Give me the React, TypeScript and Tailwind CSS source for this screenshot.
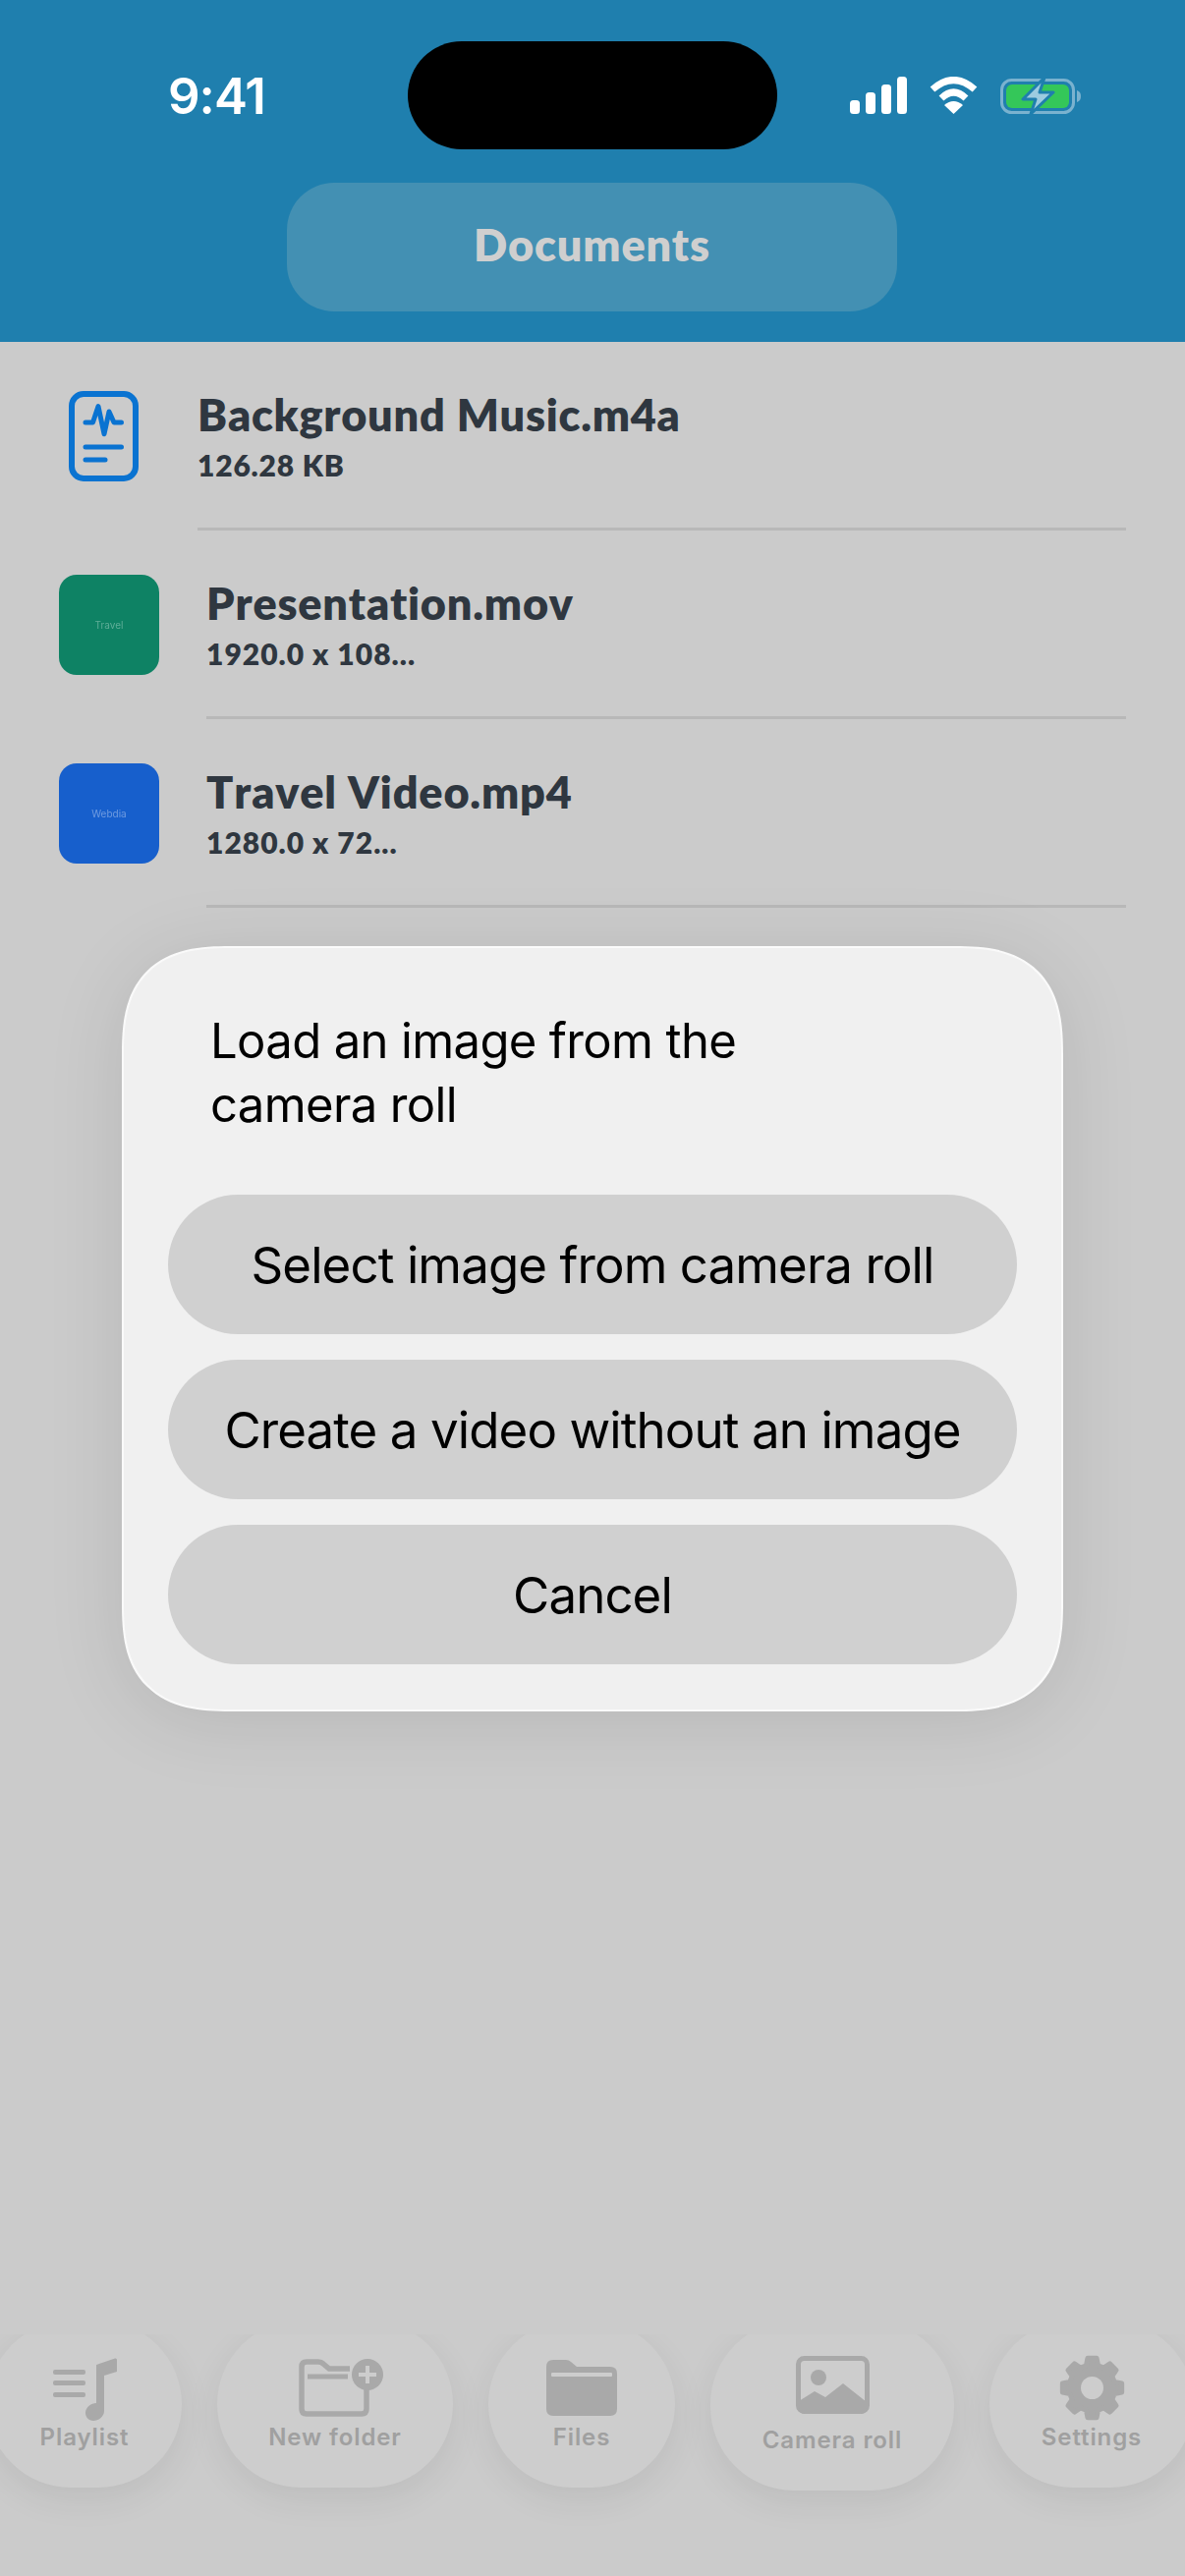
import React from 'react';

const TITLE_FONT = 'font-[Lato,"Noto_Sans",sans-serif]';

const gearPath = (() => {
  const parts: string[] = [];
  const teeth = 8;
  for (let i = 0; i < teeth; i++) {
    const a = (i / teeth) * Math.PI * 2 - Math.PI / 2;
    const pts: [number, number][] = [
      [a - 0.26, 23.5],
      [a - 0.15, 30.5],
      [a + 0.15, 30.5],
      [a + 0.26, 23.5],
    ];
    pts.forEach(([t, r]) => {
      const x = 33.5 + r * Math.cos(t);
      const y = 33.5 + r * Math.sin(t);
      parts.push(`${parts.length ? 'L' : 'M'}${x.toFixed(2)} ${y.toFixed(2)}`);
    });
  }
  return parts.join(' ') + ' Z';
})();

const SignalIcon = () => (
  <svg width="58" height="38" viewBox="0 0 58 38" fill="#fff">
    <rect x="0" y="24" width="10" height="14" rx="3.5" />
    <rect x="16" y="16" width="10" height="22" rx="3.5" />
    <rect x="32" y="8" width="10" height="30" rx="3.5" />
    <rect x="48" y="0" width="10" height="38" rx="3.5" />
  </svg>
);

const WifiIcon = () => (
  <svg width="49" height="38" viewBox="0 0 49 38" fill="none" stroke="#fff" strokeWidth="7">
    <path d="M3 13 Q24.5 -6 46 13" />
    <path d="M12 22 Q24.5 10 37 22" />
    <path d="M24.5 38 L15 29 Q24.5 21 34 29 Z" fill="#fff" stroke="none" />
  </svg>
);

const BatteryIcon = () => (
  <svg width="82" height="39" viewBox="0 0 82 39" fill="none">
    <rect x="1.5" y="3.5" width="73" height="33" rx="10" stroke="#7ab2cf" strokeWidth="3" />
    <path d="M78 14 C81 15 82 17 82 20 C82 23 81 25 78 26 Z" fill="#7ab2cf" />
    <rect x="6" y="8" width="64" height="24" rx="6" fill="#34c759" />
    <path d="M45 1 L23 23 H36 L31 38 L54 16 H40 Z" fill="#9ccbe0" stroke="#1f7fae" strokeWidth="3" strokeLinejoin="round" />
  </svg>
);

const AudioDocIcon = () => (
  <svg width="71" height="92" viewBox="0 0 71 92" fill="none" stroke="#0a73d1" strokeWidth="5" strokeLinecap="round" strokeLinejoin="round">
    <rect x="3" y="3" width="65" height="86" rx="12" strokeWidth="6" />
    <path d="M17 32 H24.5 L30 15.5 L36 43.7 L41 21 L46 32 H53.5" />
    <path d="M17 57 H53.5" />
    <path d="M17 70 H37" />
  </svg>
);

const PlaylistIcon = () => (
  <svg width="65" height="64" viewBox="0 0 65 64" fill="#a9a9a9">
    <rect x="0" y="12" width="33" height="5" rx="2" />
    <rect x="0" y="23" width="33" height="5" rx="2" />
    <rect x="0" y="35" width="33" height="5" rx="2" />
    <path d="M44 7 L63 0.5 Q65 0 65 2 V14 L52 18 V54 C52 60 46 64 41 64 C36 64 33 60 33 56 C33 50 39 46 44 46 Z" />
  </svg>
);

const NewFolderIcon = () => (
  <svg width="88" height="60" viewBox="0 0 88 60" fill="none">
    <path d="M69 28 V52 Q69 57 64 57 H8 Q3 57 3 52 V9 Q3 4 8 4 H20 Q23 4 25 6 L31 11 H52" stroke="#a9a9a9" strokeWidth="5.5" />
    <path d="M9 19 H50" stroke="#a9a9a9" strokeWidth="5" />
    <circle cx="70" cy="17" r="16" fill="#a9a9a9" />
    <path d="M70 8 V26 M61 17 H79" stroke="#cdcdcd" strokeWidth="4" />
  </svg>
);

const FilesIcon = () => (
  <svg width="72" height="57" viewBox="0 0 72 57">
    <path d="M0 7 Q0 0 7 0 H20 Q23 0 25 2 L31 7 H65 Q72 7 72 14 V50 Q72 57 65 57 H7 Q0 57 0 50 Z" fill="#a9a9a9" />
    <rect x="5" y="13" width="62" height="4" rx="1" fill="#cdcdcd" />
  </svg>
);

const CameraRollIcon = () => (
  <svg width="75" height="59" viewBox="0 0 75 59" fill="none">
    <rect x="2.5" y="2.5" width="70" height="54" rx="6" stroke="#a9a9a9" strokeWidth="5" />
    <circle cx="23" cy="22" r="8" fill="#a9a9a9" />
    <path d="M3 46 L19 36 L30 42 L48 28 L72 47 V52 Q72 59 66 59 H9 Q3 59 3 52 Z" fill="#a9a9a9" />
  </svg>
);

const SettingsIcon = () => (
  <svg width="67" height="67" viewBox="0 0 67 67">
    <path d={gearPath} fill="#a9a9a9" stroke="#a9a9a9" strokeWidth="5" strokeLinejoin="round" />
    <circle cx="33.5" cy="33.5" r="11.5" fill="#cdcdcd" />
  </svg>
);

const files = [
  { name: 'Presentation.mov', meta: '1920.0 x 108...', color: 'bg-[#0e8264]', label: 'Travel', labelColor: 'text-[#5fae98]' },
  { name: 'Travel Video.mp4', meta: '1280.0 x 72...', color: 'bg-[#175fcc]', label: 'Webdia', labelColor: 'text-[#6f9be0]' },
];

const tabs = [
  { label: 'Playlist', icon: <PlaylistIcon />, blob: 'w-[198px] h-[170px] pt-[38px]', box: 'h-[64px]' },
  { label: 'New folder', icon: <NewFolderIcon />, blob: 'w-[240px] h-[170px] pt-[38px]', box: 'h-[64px] pl-[13px]' },
  { label: 'Files', icon: <FilesIcon />, blob: 'w-[190px] h-[170px] pt-[38px]', box: 'h-[64px] pt-[2px]' },
  { label: 'Camera roll', icon: <CameraRollIcon />, blob: 'w-[248px] h-[173px] pt-[36px]', box: 'h-[69px]' },
  { label: 'Settings', icon: <SettingsIcon />, blob: 'w-[208px] h-[170px] pt-[35px]', box: 'h-[67px]' },
];

const dialogButtons = ['Select image from camera roll', 'Create a video without an image', 'Cancel'];

export default function App() {
  return (
    <div className="relative flex h-[2622px] w-[1206px] flex-col overflow-hidden bg-[#cbcbcb]">
      {/* Header */}
      <header className="flex h-[348px] shrink-0 flex-col bg-[#1f7fae]">
        <div className="flex items-center pt-[42px]">
          <span className="w-[415px] pl-[171px] font-[Inter,sans-serif] text-[51px] leading-none font-semibold tracking-[-1px] whitespace-nowrap text-white">
            9:41
          </span>
          <div className="h-[110px] w-[376px] rounded-[55px] bg-black" />
          <div className="ml-[74px] flex items-center gap-[23px]">
            <SignalIcon />
            <WifiIcon />
            <BatteryIcon />
          </div>
        </div>
        <div className="mt-[34px] ml-[292px] flex h-[131px] w-[621px] items-center justify-center rounded-[48px] bg-[#4390b3] pb-[3px]">
          <span className={`${TITLE_FONT} text-[45px] font-extrabold tracking-[0.9px] text-[#cfcfcf]`}>Documents</span>
        </div>
      </header>

      {/* File list */}
      <div className="flex flex-col">
        <div className="flex h-[192px] items-center pl-[70px]">
          <AudioDocIcon />
          <div className="mr-[60px] ml-[60px] flex flex-1 flex-col justify-center self-stretch border-b-[3px] border-[#b8b8b8] pb-[2px]">
            <div className={`${TITLE_FONT} text-[45px] leading-[58px] font-extrabold tracking-[0.75px] [font-kerning:none] text-[#2f3740]`}>Background Music.m4a</div>
            <div className={`${TITLE_FONT} mt-[4px] text-[30px] leading-[36px] font-extrabold tracking-[0.8px] text-[#2f3740]`}>126.28 KB</div>
          </div>
        </div>
        {files.map(file => (
          <div key={file.name} className="flex h-[192px] items-center pl-[60px]">
            <div className={`flex h-[102px] w-[102px] items-center justify-center rounded-[18px] ${file.color}`}>
              <span className={`font-[Inter,sans-serif] text-[10px] blur-[0.4px] ${file.labelColor}`}>{file.label}</span>
            </div>
            <div className="mr-[60px] ml-[48px] flex flex-1 flex-col justify-center self-stretch border-b-[3px] border-[#b8b8b8] pb-[2px]">
              <div className={`${TITLE_FONT} text-[45px] leading-[58px] font-extrabold tracking-[0.8px] [font-kerning:none] text-[#2f3740]`}>{file.name}</div>
              <div className={`${TITLE_FONT} mt-[4px] text-[30px] leading-[36px] font-extrabold tracking-[1px] text-[#2f3740]`}>{file.meta}</div>
            </div>
          </div>
        ))}
      </div>

      {/* Bottom tab bar */}
      <nav className="mt-auto mb-[22px] -ml-[13px] flex h-[224px] shrink-0 items-start gap-[36px] overflow-hidden">
        {tabs.map(tab => (
          <div
            key={tab.label}
            className={`-mt-[14px] flex shrink-0 flex-col items-center rounded-[85px] bg-[#cdcdcd] shadow-[0_12px_36px_rgba(0,0,0,0.07)] ${tab.blob}`}
          >
            <div className={`flex items-start ${tab.box}`}>{tab.icon}</div>
            <span className="mt-[2px] font-[Inter,sans-serif] text-[24px] leading-[30px] font-semibold tracking-[0.9px] text-[#a0a0a0]">
              {tab.label}
            </span>
          </div>
        ))}
      </nav>

      {/* Dialog */}
      <div className="absolute top-[963px] left-[124px] flex w-[958px] flex-col rounded-[110px] border-2 border-[#fafafa] bg-[#f0f0f0] [corner-shape:superellipse(1.4)] px-[45px] pt-[62px] pb-[46px] shadow-[0_10px_80px_rgba(0,0,0,0.1)]">
        <p className="pl-[43px] font-[Inter,sans-serif] text-[49px] leading-[65px] tracking-[-0.64px] text-black">
          Load an image from the
          <br />
          camera roll
        </p>
        <div className="mt-[59px] flex flex-col gap-[26px]">
          {dialogButtons.map(label => (
            <button
              key={label}
              className="flex h-[142px] items-center justify-center rounded-[71px] bg-[#d0d0d0] font-[Inter,sans-serif] text-[51px] leading-none tracking-[-0.9px] text-black"
            >
              {label}
            </button>
          ))}
        </div>
      </div>
    </div>
  );
}
